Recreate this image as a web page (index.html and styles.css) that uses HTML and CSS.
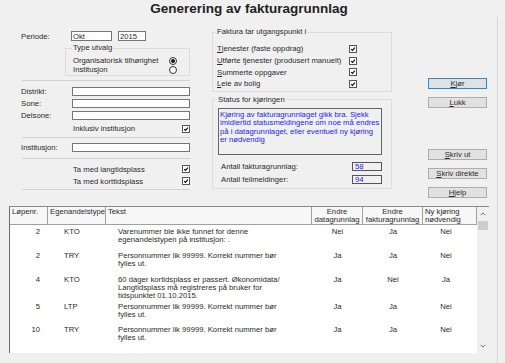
FILE: index.html
```html
<!DOCTYPE html>
<html lang="no">
<head>
    <meta charset="UTF-8">
    <title>Generering av fakturagrunnlag</title>
    <link rel="stylesheet" href="styles.css">
</head>
<body>
    <div class="title">Generering av fakturagrunnlag</div>

    <div class="window">
        <div class="top">
            <!-- venstre kolonne: utvalg -->
            <div class="left">
                <div class="row periode">
                    <label class="lbl">Periode:</label>
                    <input class="field okt" value="Okt">
                    <input class="field aar" value="2015">
                </div>

                <fieldset class="group utvalg">
                    <legend>Type utvalg</legend>
                    <div class="opt"><span>Organisatorisk tilhørighet</span><span class="radio on"></span></div>
                    <div class="opt"><span>Institusjon</span><span class="radio"></span></div>
                </fieldset>

                <div class="sep s1"></div>

                <div class="frow distrikt"><label class="lbl">Distrikt:</label><input class="field wide"></div>
                <div class="frow"><label class="lbl">Sone:</label><input class="field wide"></div>
                <div class="frow"><label class="lbl">Delsone:</label><input class="field wide"></div>

                <div class="crow inkl"><span>Inklusiv institusjon</span><span class="check"><svg viewBox="0 0 8 8"><path d="M1.6 4.2 L3.3 5.9 L6.5 2.2"/></svg></span></div>

                <div class="sep s2"></div>

                <div class="frow inst"><label class="lbl">Institusjon:</label><input class="field wide"></div>

                <div class="sep s3"></div>

                <div class="crow lang"><span>Ta med langtidsplass</span><span class="check"><svg viewBox="0 0 8 8"><path d="M1.6 4.2 L3.3 5.9 L6.5 2.2"/></svg></span></div>
                <div class="crow kort"><span>Ta med korttidsplass</span><span class="check"><svg viewBox="0 0 8 8"><path d="M1.6 4.2 L3.3 5.9 L6.5 2.2"/></svg></span></div>

                <div class="sep s4"></div>
            </div>

            <!-- midtre kolonne: faktura og status -->
            <div class="middle">
                <fieldset class="group faktura">
                    <legend>Faktura tar utgangspunkt i</legend>
                    <div class="item"><span><u>T</u>jenester (faste oppdrag)</span><span class="check"><svg viewBox="0 0 8 8"><path d="M1.6 4.2 L3.3 5.9 L6.5 2.2"/></svg></span></div>
                    <div class="item"><span><u>U</u>tførte tjenester (produsert manuelt)</span><span class="check"><svg viewBox="0 0 8 8"><path d="M1.6 4.2 L3.3 5.9 L6.5 2.2"/></svg></span></div>
                    <div class="item"><span><u>S</u>ummerte oppgaver</span><span class="check"><svg viewBox="0 0 8 8"><path d="M1.6 4.2 L3.3 5.9 L6.5 2.2"/></svg></span></div>
                    <div class="item"><span><u>L</u>eie av bolig</span><span class="check"><svg viewBox="0 0 8 8"><path d="M1.6 4.2 L3.3 5.9 L6.5 2.2"/></svg></span></div>
                </fieldset>

                <fieldset class="group status">
                    <legend>Status for kjøringen</legend>
                    <div class="status-text">Kjøring av fakturagrunnlaget gikk bra. Sjekk<br>imidlertid statusmeldingene om noe må endres<br>på i datagrunnlaget, eller eventuell ny kjøring<br>er nødvendig</div>
                    <div class="count first"><span>Antall fakturagrunnlag:</span><span class="num">58</span></div>
                    <div class="count"><span>Antall feilmeldinger:</span><span class="num">94</span></div>
                </fieldset>
            </div>

            <!-- knapper -->
            <div class="buttons">
                <div class="btn kjor"><u>K</u>jør</div>
                <div class="btn lukk"><u>L</u>ukk</div>
                <div class="btn skriv"><u>S</u>kriv ut</div>
                <div class="btn"><u>S</u>kriv direkte</div>
                <div class="btn"><u>H</u>jelp</div>
            </div>
        </div>

        <!-- resultatliste -->
        <div class="grid">
            <table>
                <colgroup>
                    <col style="width:38px">
                    <col style="width:58px">
                    <col style="width:206px">
                    <col style="width:51px">
                    <col style="width:60px">
                    <col style="width:54px">
                </colgroup>
                <tr class="head">
                    <th>Løpenr.</th>
                    <th>Egenandelstype</th>
                    <th>Tekst</th>
                    <th class="c">Endre<br>datagrunnlag</th>
                    <th class="c">Endre<br>fakturagrunnlag</th>
                    <th>Ny kjøring<br>nødvendig</th>
                </tr>
                <tr>
                    <td class="nr">2</td><td class="type">KTO</td>
                    <td class="txt">Varenummer ble ikke funnet for denne<br>egenandelstypen på institusjon: .</td>
                    <td class="c">Nei</td><td class="c">Ja</td><td class="c last">Nei</td>
                </tr>
                <tr>
                    <td class="nr">2</td><td class="type">TRY</td>
                    <td class="txt">Personnummer lik 99999. Korrekt nummer bør<br>fylles ut.</td>
                    <td class="c">Ja</td><td class="c">Ja</td><td class="c last">Nei</td>
                </tr>
                <tr>
                    <td class="nr">4</td><td class="type">KTO</td>
                    <td class="txt">60 dager kortidsplass er passert. Økonomidata/<br>Langtidsplass må registreres på bruker for<br>tidspunktet 01.10.2015.</td>
                    <td class="c">Ja</td><td class="c">Nei</td><td class="c last">Ja</td>
                </tr>
                <tr>
                    <td class="nr">5</td><td class="type">LTP</td>
                    <td class="txt">Personnummer lik 99999. Korrekt nummer bør<br>fylles ut.</td>
                    <td class="c">Ja</td><td class="c">Ja</td><td class="c last">Nei</td>
                </tr>
                <tr>
                    <td class="nr">10</td><td class="type">TRY</td>
                    <td class="txt">Personnummer lik 99999. Korrekt nummer bør<br>fylles ut.</td>
                    <td class="c">Ja</td><td class="c">Ja</td><td class="c last">Nei</td>
                </tr>
            </table>
            <div class="scroll">
                <div class="arrow up"><svg viewBox="0 0 8 5"><path d="M1 4 L4 1 L7 4"/></svg></div>
                <div class="thumb"></div>
                <div class="track"></div>
                <div class="arrow down"><svg viewBox="0 0 8 5"><path d="M1 1 L4 4 L7 1"/></svg></div>
            </div>
        </div>
    </div>
</body>
</html>
```

FILE: styles.css
```css
body {
    margin: 0;
    width: 505px;
    height: 363px;
    overflow: hidden;
    background: #f0f0f0;
    font-family: 'Liberation Sans', Arial, sans-serif;
    font-size: 7.7px;
    color: #2a2a2a;
}
.title {
    width: 498px;
    height: 17px;
    line-height: 17px;
    text-align: center;
    font-size: 13.5px;
    font-weight: bold;
    color: #222;
}
.window {
    width: 497px;
    height: 346px;
    border-right: 1px solid #d6d6d6;
}
.top {
    display: flex;
    height: 189px;
}

/* venstre */
.left {
    margin-left: 21px;
    width: 169px;
}
.row {
    display: flex;
    align-items: center;
}
.periode {
    margin-top: 14px;
    height: 10px;
}
.lbl {
    width: 50px;
    flex-shrink: 0;
}
.field {
    box-sizing: border-box;
    height: 9px;
    padding: 0 1px;
    border: 1px solid #767676;
    background: #fff;
    font: inherit;
    line-height: 7px;
    color: #2a2a2a;
    outline: none;
}
.periode .field {
    height: 10px;
}
.okt {
    width: 41px;
}
.aar {
    width: 28px;
    margin-left: 6px;
}
.group {
    box-sizing: border-box;
    margin: 0;
    border: 1px solid #dcdcdc;
    min-width: 0;
}
.group legend {
    padding: 0 1px;
    margin-left: -1px;
    line-height: 8px;
}
.utvalg {
    margin: 3px 0 0 44px;
    width: 125px;
    padding: 4px 12px 1px 7px;
}
.opt {
    display: flex;
    justify-content: space-between;
    align-items: center;
    height: 9px;
}
.radio {
    box-sizing: border-box;
    width: 8px;
    height: 8px;
    border: 1px solid #333;
    border-radius: 50%;
    background: #fff;
    display: flex;
    align-items: center;
    justify-content: center;
}
.radio.on::after {
    content: "";
    width: 4px;
    height: 4px;
    border-radius: 50%;
    background: #111;
}
.sep {
    margin-left: 1px;
    border-top: 1px solid #d2d2d2;
}
.s1 { margin-top: 4px; }
.s2 { margin-top: 4px; }
.s3 { margin-top: 6px; }
.s4 { margin-top: 3px; }
.frow {
    display: flex;
    align-items: center;
    height: 9px;
    margin-top: 3px;
}
.frow .lbl {
    width: 51px;
}
.distrikt { margin-top: 6px; }
.inst { margin-top: 5px; }
.wide {
    width: 118px;
}
.crow {
    display: flex;
    justify-content: space-between;
    align-items: center;
    height: 9px;
    padding-left: 52px;
}
.inkl { margin-top: 4px; }
.lang { margin-top: 5px; height: 10px; }
.kort { margin-top: 2px; height: 10px; }
.check {
    box-sizing: border-box;
    width: 8px;
    height: 8px;
    border: 1px solid #555;
    background: #fff;
    display: block;
}
.check svg {
    display: block;
    width: 6px;
    height: 6px;
}
.check path {
    fill: none;
    stroke: #000;
    stroke-width: 1.4;
}

/* midten */
.middle {
    margin-left: 22px;
    width: 180px;
}
.faktura {
    margin-top: 11px;
    padding: 7px 34px 1px 4px;
}
.item {
    display: flex;
    justify-content: space-between;
    align-items: center;
    height: 11.7px;
}
.status {
    margin-top: 4px;
    padding: 4px 9px 4px 5px;
}
.status-text {
    box-sizing: border-box;
    width: 164px;
    height: 47px;
    padding: 2px 1px;
    border: 1px solid #646464;
    line-height: 8.5px;
    white-space: nowrap;
    overflow: hidden;
    color: #2323f2;
}
.count {
    display: flex;
    justify-content: space-between;
    align-items: center;
    height: 9px;
    margin-top: 4px;
    padding-left: 3px;
}
.count.first {
    margin-top: 7px;
}
.num {
    box-sizing: border-box;
    width: 30px;
    height: 9px;
    padding-left: 2px;
    border: 1px solid #555;
    line-height: 7px;
    color: #2323f2;
}

/* knapper */
.buttons {
    margin-left: 36px;
    width: 59px;
    display: flex;
    flex-direction: column;
}
.btn {
    box-sizing: border-box;
    height: 11px;
    margin-top: 8px;
    border: 1px solid #adadad;
    background: #e1e1e1;
    line-height: 9px;
    text-align: center;
}
.btn.kjor {
    margin-top: 61px;
    border-color: #2a8ad8;
}
.btn.skriv {
    margin-top: 41px;
}

/* liste */
.grid {
    box-sizing: border-box;
    display: flex;
    margin-left: 9px;
    width: 480px;
    height: 147px;
    border-left: 1px solid #6c6c6c;
    border-top: 1px solid #8a8a8a;
    background: #fff;
}
table {
    width: 467px;
    table-layout: fixed;
    border-collapse: separate;
    border-spacing: 0;
    align-self: flex-start;
}
th {
    box-sizing: border-box;
    padding: 1px 2px 0;
    border-right: 1px solid #a0a0a0;
    border-bottom: 1px solid #a0a0a0;
    background: #f7f7f7;
    font-weight: normal;
    text-align: left;
    vertical-align: top;
    line-height: 8px;
    white-space: nowrap;
    overflow: hidden;
}
th.c {
    text-align: center;
}
tr.head {
    height: 17px;
}
tr {
    height: 23.75px;
}
td {
    padding: 3px 0 0;
    vertical-align: top;
    line-height: 8px;
    white-space: nowrap;
    color: #2a2a2a;
}
td.nr {
    text-align: right;
    padding-right: 8px;
}
td.type {
    padding-left: 16px;
}
td.txt {
    padding-left: 12px;
}
td.c {
    text-align: center;
}
td.last {
    padding-right: 8px;
}
.scroll {
    width: 12px;
    display: flex;
    flex-direction: column;
    background: #f0f0f0;
}
.arrow {
    height: 14px;
    display: flex;
    align-items: center;
    justify-content: center;
}
.arrow svg {
    width: 6px;
    height: 4px;
}
.arrow path {
    fill: none;
    stroke: #606060;
    stroke-width: 1.2;
}
.thumb {
    height: 9px;
    margin: 0 1px;
    background: #cdcdcd;
}
.track {
    flex: 1;
}
```
